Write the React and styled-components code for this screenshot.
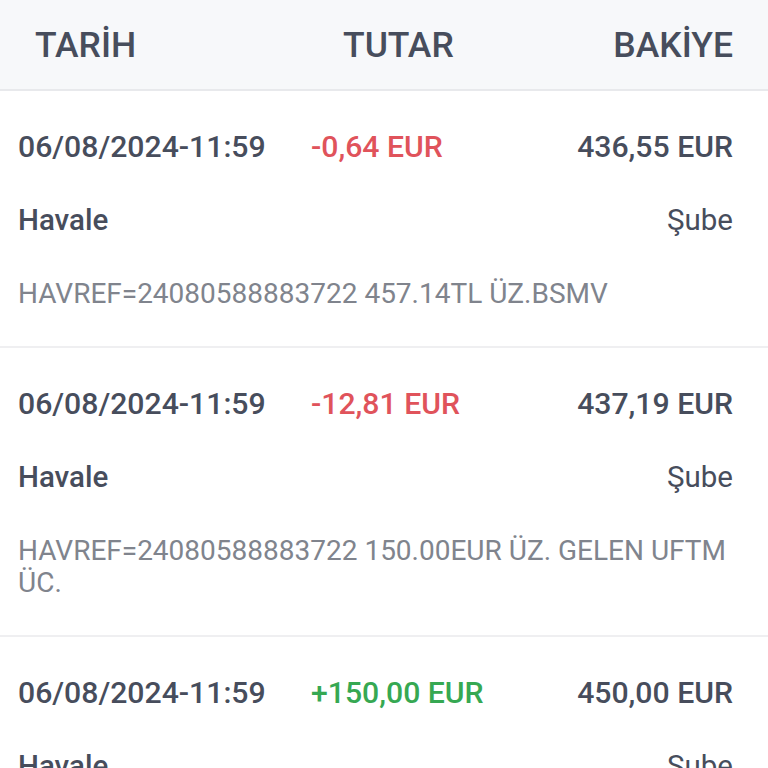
import React from "react";
import styled, { createGlobalStyle } from "styled-components";

const GlobalStyle = createGlobalStyle`
  body {
    margin: 0;
    background: #fff;
    font-family: Roboto, "Noto Sans", sans-serif;
  }
`;

const Page = styled.div`
  width: 768px;
  height: 768px;
  overflow: hidden;
  background: #fff;
`;

const Header = styled.div`
  display: grid;
  grid-template-columns: 308px 1fr auto;
  align-items: center;
  height: 89px;
  padding: 0 35px;
  background: #f7f8fa;
  border-bottom: 2px solid #e8e9ec;
  font-size: 35.5px;
  font-weight: 500;
  color: #474d5c;
`;

const Row = styled.div`
  padding: 38px 35px 36px 18px;
  border-bottom: 2px solid #efeff1;
`;

const TopLine = styled.div`
  display: grid;
  grid-template-columns: 293px 1fr auto;
  align-items: center;
  height: 26px;
  font-size: 30.2px;
  font-weight: 500;
  color: #474d5c;
`;

const Amount = styled.span`
  color: ${p => (p.$positive ? "#36a852" : "#e0535b")};
`;

const TypeLine = styled.div`
  display: flex;
  justify-content: space-between;
  align-items: center;
  height: 26px;
  margin-top: 52px;
  font-size: 29.5px;
  color: #474d5c;
`;

const TypeName = styled.span`
  font-weight: 500;
`;

const Desc = styled.div`
  margin-top: 45px;
  font-size: 28px;
  line-height: 32px;
  color: #80848d;
`;

const rows = [
  {
    date: "06/08/2024-11:59",
    amount: "-0,64 EUR",
    balance: "436,55 EUR",
    desc: "HAVREF=24080588883722 457.14TL ÜZ.BSMV",
  },
  {
    date: "06/08/2024-11:59",
    amount: "-12,81 EUR",
    balance: "437,19 EUR",
    desc: "HAVREF=24080588883722 150.00EUR ÜZ. GELEN UFTM ÜC.",
  },
  {
    date: "06/08/2024-11:59",
    amount: "+150,00 EUR",
    balance: "450,00 EUR",
    positive: true,
    desc: "HAVREF=24080588883722 150.00EUR GELEN HAVALE",
  },
];

export default function App() {
  return (
    <Page>
      <GlobalStyle />
      <Header>
        <span>TARİH</span>
        <span>TUTAR</span>
        <span>BAKİYE</span>
      </Header>
      {rows.map((r, i) => (
        <Row key={i}>
          <TopLine>
            <span>{r.date}</span>
            <Amount $positive={r.positive}>{r.amount}</Amount>
            <span>{r.balance}</span>
          </TopLine>
          <TypeLine>
            <TypeName>Havale</TypeName>
            <span>Şube</span>
          </TypeLine>
          <Desc>{r.desc}</Desc>
        </Row>
      ))}
    </Page>
  );
}
